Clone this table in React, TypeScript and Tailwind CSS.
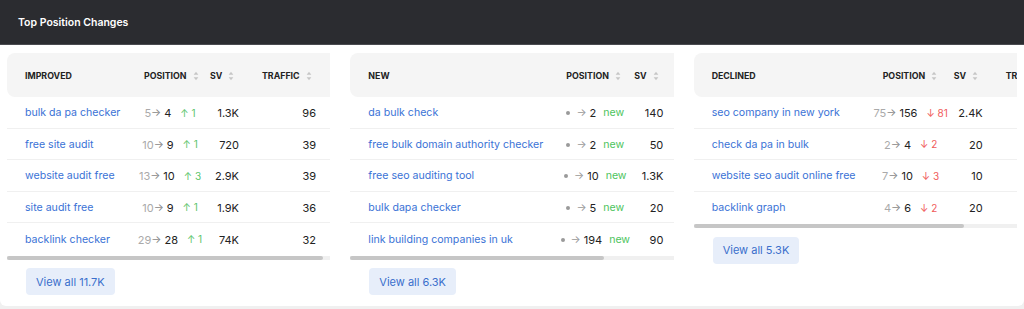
import React from "react";

type Row = { kw: string; from?: string; to: string; change: string; sv: string; traffic: string };

const improved: Row[] = [
  { kw: "bulk da pa checker", from: "5", to: "4", change: "1", sv: "1.3K", traffic: "96" },
  { kw: "free site audit", from: "10", to: "9", change: "1", sv: "720", traffic: "39" },
  { kw: "website audit free", from: "13", to: "10", change: "3", sv: "2.9K", traffic: "39" },
  { kw: "site audit free", from: "10", to: "9", change: "1", sv: "1.9K", traffic: "36" },
  { kw: "backlink checker", from: "29", to: "28", change: "1", sv: "74K", traffic: "32" },
];
const fresh: Row[] = [
  { kw: "da bulk check", to: "2", change: "new", sv: "140", traffic: "12" },
  { kw: "free bulk domain authority checker", to: "2", change: "new", sv: "50", traffic: "8" },
  { kw: "free seo auditing tool", to: "10", change: "new", sv: "1.3K", traffic: "30" },
  { kw: "bulk dapa checker", to: "5", change: "new", sv: "20", traffic: "2" },
  { kw: "link building companies in uk", to: "194", change: "new", sv: "90", traffic: "0" },
];
const declined: Row[] = [
  { kw: "seo company in new york", from: "75", to: "156", change: "81", sv: "2.4K", traffic: "0" },
  { kw: "check da pa in bulk", from: "2", to: "4", change: "2", sv: "20", traffic: "1" },
  { kw: "website seo audit online free", from: "7", to: "10", change: "3", sv: "10", traffic: "0" },
  { kw: "backlink graph", from: "4", to: "6", change: "2", sv: "20", traffic: "1" },
];

function Sort() {
  return (
    <svg width="6" height="10" viewBox="0 0 6 10" className="ml-[6px] shrink-0">
      <path d="M3 0.8 L5.3 3.8 H0.7 Z" fill="#c6c6c6" />
      <path d="M3 9.2 L5.3 6.2 H0.7 Z" fill="#c6c6c6" />
    </svg>
  );
}

type Cols = {
  content: string;
  kw: string;
  pos: string;
  sv: string;
  svHead: string;
  tr: string;
  thumb: string;
};

function Table({
  title,
  rows,
  kind,
  cols,
  button,
}: {
  title: string;
  rows: Row[];
  kind: "up" | "new" | "down";
  cols: Cols;
  button: string;
}) {
  return (
    <div className="flex flex-col min-w-0">
      <div className="overflow-hidden">
        <div className={cols.content}>
          <div className="h-[44px] bg-[#f5f5f5] rounded-lg flex items-center text-[8.8px] font-bold text-[#222] pt-px">
            <div className={`${cols.kw} pl-[18px]`}>{title}</div>
            <div className={`${cols.pos} pl-[9px] flex items-center`}>
              POSITION
              <Sort />
            </div>
            <div className={`${cols.sv} ${cols.svHead} flex items-center`}>
              SV
              <Sort />
            </div>
            <div className={`${cols.tr} pl-[17px] flex items-center`}>
              TRAFFIC
              <Sort />
            </div>
          </div>
          {rows.map((r, i) => (
            <div
              key={r.kw}
              className={`h-[31.5px] flex items-center text-[10.6px] pt-[2px] ${
                i < rows.length - 1 ? "border-b border-[#f0f0f0]" : ""
              }`}
            >
              <div className={`${cols.kw} pl-[18px] text-[#3a72d6] whitespace-nowrap`}>{r.kw}</div>
              <div className={`${cols.pos} flex items-center justify-center whitespace-nowrap`}>
                {kind === "new" ? (
                  <>
                    <span className="w-[4px] h-[4px] rounded-full bg-[#9a9a9a] mr-[6px]" />
                    <span className="text-[#999]">→</span>
                    <span className="ml-[3px] text-[#222] text-[11px]">{r.to}</span>
                    <span className="ml-[7px] text-[#4cc45c]">new</span>
                  </>
                ) : (
                  <>
                    <span className="text-[#aaa] text-[11px]">{r.from}</span>
                    <span className="text-[#888]">→</span>
                    <span className="ml-[3px] text-[#222] text-[11px]">{r.to}</span>
                    {kind === "up" ? (
                      <span className="ml-[9px] text-[#5cc56b] text-[10px]">↑ {r.change}</span>
                    ) : (
                      <span className="ml-[9px] text-[#f05a5a] text-[10px]">↓ {r.change}</span>
                    )}
                  </>
                )}
              </div>
              <div className={`${cols.sv} text-right pr-[6px] text-[#222] text-[11px]`}>{r.sv}</div>
              <div className={`${cols.tr} text-right pr-[21px] text-[#222] text-[11px]`}>{r.traffic}</div>
            </div>
          ))}
        </div>
      </div>
      <div className="h-[4px] mt-px bg-[#f0f0f0]">
        <div className={`h-full bg-[#c6c6c6] rounded-full ${cols.thumb}`} />
      </div>
      <div className="pl-[19px] mt-2">
        <button className="h-[27px] px-[10px] rounded bg-[#e7eefa] text-[#3a6fcc] text-[11px]">
          {button}
        </button>
      </div>
    </div>
  );
}

export default function App() {
  return (
    <div className="w-[1024px] h-[309px] bg-[#f0f0f0] font-['Inter',sans-serif] overflow-hidden">
      <div className="h-[45px] bg-[#2b2c30] flex items-center pl-[18px] pt-[2px] text-white text-[10.5px] font-semibold border-b border-[#4a4b50]">
        Top Position Changes
      </div>
      <div className="bg-white h-[261px] grid grid-cols-3 gap-5 px-[7px] pt-2 rounded-b-md">
        <Table
          title="IMPROVED"
          rows={improved}
          kind="up"
          button="View all 11.7K"
          cols={{
            content: "w-[330px]",
            kw: "w-[128px]",
            pos: "w-[70px]",
            sv: "w-[40px]",
            svHead: "pl-[5px]",
            tr: "w-[92px]",
            thumb: "w-[316px]",
          }}
        />
        <Table
          title="NEW"
          rows={fresh}
          kind="new"
          button="View all 6.3K"
          cols={{
            content: "w-[413px]",
            kw: "w-[207px]",
            pos: "w-[76px]",
            sv: "w-[36px]",
            svHead: "pl-[1px]",
            tr: "w-[94px]",
            thumb: "w-[254px]",
          }}
        />
        <Table
          title="DECLINED"
          rows={declined}
          kind="down"
          button="View all 5.3K"
          cols={{
            content: "w-[387px]",
            kw: "w-[180px]",
            pos: "w-[74px]",
            sv: "w-[41px]",
            svHead: "pl-[6px]",
            tr: "w-[92px]",
            thumb: "w-[270px]",
          }}
        />
      </div>
    </div>
  );
}
